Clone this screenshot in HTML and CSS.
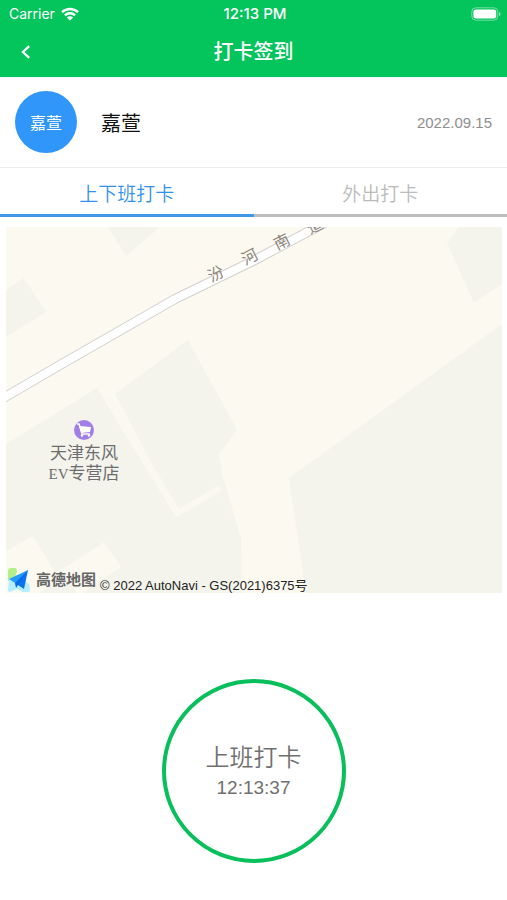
FILE: index.html
```html
<!DOCTYPE html>
<html lang="zh-CN">
<head>
<meta charset="utf-8">
<meta name="viewport" content="width=device-width, initial-scale=1">
<title>打卡签到</title>
<link rel="stylesheet" href="styles.css">
</head>
<body>
<header class="header">
  <div class="status">
    <div class="carrier">
      <span>Carrier</span>
      <svg class="wifi" viewBox="0 0 18 14" aria-hidden="true">
        <path d="M1 5.2a11.5 11.5 0 0 1 16 0M3.9 8.3a7.3 7.3 0 0 1 10.2 0" fill="none" stroke="currentColor" stroke-width="2.4"/>
        <path d="M9 13.6 5.8 10.5a4.6 4.6 0 0 1 6.4 0Z" fill="currentColor"/>
      </svg>
    </div>
    <span class="clock">12:13 PM</span>
    <svg class="battery" viewBox="0 0 30 14" aria-hidden="true">
      <rect x="0.8" y="0.8" width="26" height="12.4" rx="4" fill="none" stroke="currentColor" stroke-opacity=".45"/>
      <rect x="2.4" y="2.4" width="22.8" height="9.2" rx="2.4" fill="currentColor"/>
      <path d="M28 4.8c2.2 1 2.2 3.4 0 4.4Z" fill="currentColor" fill-opacity=".5"/>
    </svg>
  </div>
  <div class="nav">
    <button class="back" type="button" aria-label="返回">
      <svg viewBox="0 0 10 14" aria-hidden="true"><path d="M8.2 1.2 2 7l6.2 5.8" fill="none" stroke="currentColor" stroke-width="2.3"/></svg>
    </button>
    <h1 class="title">打卡签到</h1>
  </div>
</header>

<main>
  <section class="profile">
    <div class="avatar">嘉萱</div>
    <span class="name">嘉萱</span>
    <time class="date" datetime="2022-09-15">2022.09.15</time>
  </section>

  <nav class="tabs">
    <button class="tab active" type="button">上下班打卡</button>
    <button class="tab" type="button">外出打卡</button>
  </nav>

  <section class="map">
    <svg class="tiles" viewBox="6 227 496 366" preserveAspectRatio="xMidYMid slice">
      <g fill="#f4f4ed">
        <path d="M108 227H159L151 235 126 256Z"/>
        <path d="M6 290 24 278 46 312 6 337Z"/>
        <path d="M459 227 447 243 474 303 502 284V227Z"/>
        <path d="M502 324 289 478 306 593H502Z"/>
        <path d="M6 444 97 388 119 424 176 517 218 494 241 537 242 593H6Z"/>
        <path d="M115 394 188 340 237 430 219 454 222 474 184 506 176 510Z"/>
      </g>
      <g fill="#fbf9f0">
        <path d="M6 551 33 536 58 577 40 593H6Z"/>
        <path d="M63 569 104 542 121 567 82 593H76Z"/>
      </g>
      <path d="M176 510 184 506 222 474 240 535 218 494 180 515Z" fill="#f4f4ed"/>
      <path d="M108 396 178 513 220 488" fill="none" stroke="#faf8f0" stroke-width="6"/>
      <g fill="none" stroke-linejoin="round">
        <path d="M0 400 60 365 175 299 253 261 330 220" stroke="#d2d1cf" stroke-width="10"/>
        <path d="M0 400 60 365 175 299 253 261 330 220" stroke="#fff" stroke-width="8"/>
      </g>
      <g class="road-name">
        <text transform="translate(216 274) rotate(-27)">汾</text>
        <text transform="translate(250 257) rotate(-27)">河</text>
        <text transform="translate(282 242) rotate(-27)">南</text>
        <text transform="translate(315 226) rotate(-27)">道</text>
      </g>
      <circle cx="84" cy="430" r="10" fill="#a17fe6"/>
      <path d="M77 424h2l3 9" fill="none" stroke="#fff" stroke-width="1.5"/>
      <path d="M79 426 91 427 90 432 81 433Z" fill="#fff"/>
      <path d="M81 434H90" stroke="#fff" stroke-width="1.4"/>
      <circle cx="82" cy="435.5" r="1.2" fill="#fff"/>
      <circle cx="89" cy="435.5" r="1.2" fill="#fff"/>
      <g class="place-name">
        <text x="84" y="459">天津东风</text>
        <text x="84" y="479"><tspan class="place-latin">EV</tspan>专营店</text>
      </g>
    </svg>
    <div class="credit">
      <svg class="amap" viewBox="0 0 24 26" aria-hidden="true">
        <path d="M1 4q0-3 3-3h4q2 0 2 4l-4 9H1Z" fill="#b4f08a"/>
        <path d="M2 12 12 10 22 17 23 23q0 2-2 2h-5L10 22 3 25q-2 0-2-2Z" fill="#b5efff"/>
        <path d="M21 3 2 12 8 16Z" fill="#249bf8"/>
        <path d="M21 3 8 16 17 22Z" fill="#0874f0"/>
        <path d="M8 16 21 3 9 21Z" fill="#0869ed"/>
      </svg>
      <span class="brand">高德地图</span>
      <span class="copyright">© 2022 AutoNavi - GS(2021)6375号</span>
    </div>
  </section>

  <section class="punch-area">
    <button class="punch" type="button">
      <span class="punch-label">上班打卡</span>
      <span class="punch-time">12:13:37</span>
    </button>
  </section>
</main>
</body>
</html>
```
FILE: styles.css
```css
* {
  box-sizing: border-box;
}

body {
  margin: 0;
  background: #fff;
  color: #222;
  font-family: "Liberation Sans", "Noto Sans CJK SC", sans-serif;
}

button {
  margin: 0;
  padding: 0;
  border: 0;
  background: none;
  font: inherit;
  cursor: pointer;
}

svg {
  display: block;
}

.header {
  color: #fff;
  background: #04c45c;
}

.status {
  display: grid;
  grid-template-columns: 1fr auto 1fr;
  align-items: center;
  height: 27px;
  padding: 0 6px 0 9px;
  font: 14px/20px Inter, sans-serif;
}

.carrier {
  display: flex;
  align-items: center;
  gap: 6px;
}

.wifi {
  width: 18px;
  height: 14px;
}

.clock {
  font-size: 15px;
  font-weight: 500;
}

.battery {
  width: 30px;
  height: 14px;
  justify-self: end;
}

.nav {
  display: grid;
  grid-template-columns: 52px 1fr 52px;
  align-items: center;
  height: 50px;
}

.back {
  display: grid;
  place-items: center;
  height: 48px;
  color: #fff;
}

.back svg {
  width: 10px;
  height: 14px;
}

.title {
  margin: 0;
  font-size: 20px;
  line-height: 28px;
  font-weight: 500;
  text-align: center;
}

.profile {
  display: flex;
  align-items: center;
  height: 91px;
  padding: 0 15px;
  border-bottom: 1px solid #ececec;
}

.avatar {
  display: grid;
  place-items: center;
  width: 62px;
  height: 62px;
  border-radius: 50%;
  background: #3096fa;
  color: #fff;
  font-size: 16px;
}

.name {
  margin-left: 24px;
  color: #111;
  font-size: 20px;
}

.date {
  margin-left: auto;
  color: #8e8e8e;
  font-size: 15px;
}

.tabs {
  display: grid;
  grid-template-columns: 1fr 1fr;
}

.tab {
  height: 49px;
  padding-top: 2px;
  border-bottom: 3px solid #bdbdbd;
  color: #bbb;
  font-size: 19px;
  font-weight: 350;
}

.tab.active {
  border-color: #4296e8;
  color: #3592ec;
}

.map {
  position: relative;
  margin: 10px 5px 0 6px;
  background: #fcf9f1;
}

.tiles {
  width: 100%;
  height: auto;
}

.road-name {
  fill: #8d857e;
  font-size: 16px;
  text-anchor: middle;
  dominant-baseline: central;
}

.place-name {
  fill: #6d6d6d;
  font-family: "Liberation Serif", "Noto Sans CJK SC", serif;
  font-size: 17px;
  text-anchor: middle;
}

.place-latin {
  font-size: 15px;
}

.credit {
  position: absolute;
  left: 1px;
  bottom: 0;
  display: flex;
  align-items: flex-end;
}

.amap {
  width: 24px;
  height: 26px;
}

.brand {
  margin: 0 4px 4px 5px;
  color: #666;
  font-size: 15px;
  line-height: 18px;
  font-weight: 700;
}

.copyright {
  color: #222;
  font-size: 13px;
  line-height: 15px;
}

.punch-area {
  display: flex;
  justify-content: center;
  padding: 86px 0 38px;
}

.punch {
  display: flex;
  flex-direction: column;
  align-items: center;
  justify-content: center;
  width: 184px;
  height: 184px;
  border: 4px solid #07bf5b;
  border-radius: 50%;
  color: #707070;
}

.punch-label {
  padding-top: 2px;
  font-size: 24px;
  line-height: 32px;
  font-weight: 350;
}

.punch-time {
  font-size: 19px;
  line-height: 28px;
}
```
